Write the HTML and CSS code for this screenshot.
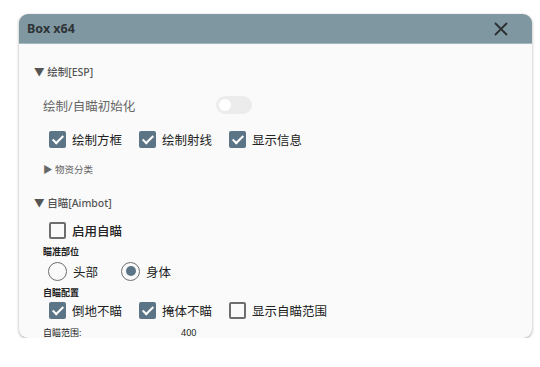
FILE: index.html
```html
<!DOCTYPE html>
<html>
<head>
  <meta charset="utf-8">
  <title>Box x64</title>
  <link rel="stylesheet" href="styles.css">
</head>
<body>
  <div class="window">
    <div class="titlebar">
      <span class="title">Box x64</span>
      <svg class="close" width="14" height="14" viewBox="0 0 14 14">
        <path d="M1 1 L13 13 M13 1 L1 13" stroke="#2b2f31" stroke-width="1.8" fill="none"/>
      </svg>
    </div>

    <div class="content">
      <div class="section-title row-esp">▼&nbsp;绘制[ESP]</div>

      <div class="row row-init">
        <span class="label-muted">绘制/自瞄初始化</span>
        <span class="toggle"><span class="knob"></span></span>
      </div>

      <div class="row row-checks">
        <label class="check"><span class="box checked"></span>绘制方框</label>
        <label class="check"><span class="box checked"></span>绘制射线</label>
        <label class="check"><span class="box checked"></span>显示信息</label>
      </div>

      <div class="sub-title">▶ 物资分类</div>

      <div class="section-title row-aim">▼&nbsp;自瞄[Aimbot]</div>

      <div class="row row-enable">
        <label class="check strong"><span class="box"></span>启用自瞄</label>
      </div>

      <div class="caption cap-part">瞄准部位</div>
      <div class="row row-radios">
        <label class="radio"><span class="circle"></span>头部</label>
        <label class="radio"><span class="circle on"></span>身体</label>
      </div>

      <div class="caption cap-conf">自瞄配置</div>
      <div class="row row-conf">
        <label class="check"><span class="box checked"></span>倒地不瞄</label>
        <label class="check"><span class="box checked"></span>掩体不瞄</label>
        <label class="check"><span class="box"></span>显示自瞄范围</label>
      </div>

      <div class="range">
        <span class="range-label">自瞄范围:</span>
        <span class="range-value">400</span>
      </div>
    </div>
  </div>
</body>
</html>
```

FILE: styles.css
```css
body {
  margin: 0;
  background: #ffffff;
  font-family: 'Noto Sans', 'Noto Sans CJK SC', sans-serif;
  color: #222;
}

.window {
  margin: 14px 0 0 19px;
  width: 513px;
  height: 324px;
  background: #fafafa;
  border-radius: 9px;
  overflow: hidden;
  box-shadow: 0 1px 3px rgba(0,0,0,0.35);
}

.titlebar {
  height: 30px;
  background: #7f97a1;
  display: flex;
  align-items: center;
  justify-content: space-between;
  padding: 0 24px 0 8px;
  border-bottom: 1px solid #a7b7be;
  box-sizing: border-box;
}

.title {
  font-size: 12.5px;
  font-weight: 700;
  color: #2e3436;
}

.close {
  display: block;
}

.content {
  padding: 0 0 0 15px;
}

.section-title {
  height: 16px;
  line-height: 16px;
  font-size: 10.5px;
  font-weight: 500;
  color: #555;
}

.row-esp { margin-top: 20px; }
.row-aim { margin-top: 18px; }

.row {
  display: flex;
  align-items: center;
  height: 20px;
  padding-left: 15px;
}

.row-init { margin-top: 15px; padding-left: 9px; }
.row-checks { margin-top: 14px; }
.row-enable { margin-top: 9px; }
.row-radios { margin-top: 3px; padding-left: 14px; }
.row-conf { margin-top: 1px; }

.label-muted {
  font-size: 12.5px;
  color: #666;
  width: 173px;
}

.toggle {
  width: 36px;
  height: 18px;
  border-radius: 9px;
  background: #ececec;
  display: flex;
  align-items: center;
  padding-left: 3px;
  box-sizing: border-box;
}

.toggle .knob {
  width: 12px;
  height: 12px;
  border-radius: 50%;
  background: #fff;
}

.check {
  display: flex;
  align-items: center;
  font-size: 12.5px;
  color: #222;
  margin-right: 17px;
}

.check.strong {
  font-weight: 500;
}

.box {
  width: 17px;
  height: 17px;
  box-sizing: border-box;
  border: 2px solid #6e6e6e;
  border-radius: 2px;
  margin-right: 6px;
  position: relative;
}

.box.checked {
  border: none;
  background: #5b7586;
}

.box.checked::after {
  content: "";
  position: absolute;
  left: 6px;
  top: 2px;
  width: 4px;
  height: 9px;
  border: solid #fff;
  border-width: 0 2px 2px 0;
  transform: rotate(45deg);
}

.sub-title {
  margin-top: 14px;
  padding-left: 9px;
  height: 14px;
  line-height: 14px;
  font-size: 9.5px;
  color: #666;
}

.caption {
  padding-left: 9px;
  height: 12px;
  line-height: 12px;
  font-size: 9px;
  font-weight: 700;
  color: #222;
}

.cap-part { margin-top: 6px; }
.cap-conf { margin-top: 6px; }

.radio {
  display: flex;
  align-items: center;
  font-size: 12.5px;
  color: #222;
  margin-right: 23px;
}

.circle {
  width: 19px;
  height: 19px;
  box-sizing: border-box;
  border: 1.5px solid #6e6e6e;
  border-radius: 50%;
  margin-right: 6px;
  display: flex;
  align-items: center;
  justify-content: center;
}

.circle.on::after {
  content: "";
  width: 10px;
  height: 10px;
  border-radius: 50%;
  background: #5b7586;
}

.range {
  margin-top: 6px;
  padding-left: 9px;
  height: 14px;
  line-height: 14px;
  font-size: 9px;
  display: flex;
}

.range-label {
  width: 138px;
}
```
